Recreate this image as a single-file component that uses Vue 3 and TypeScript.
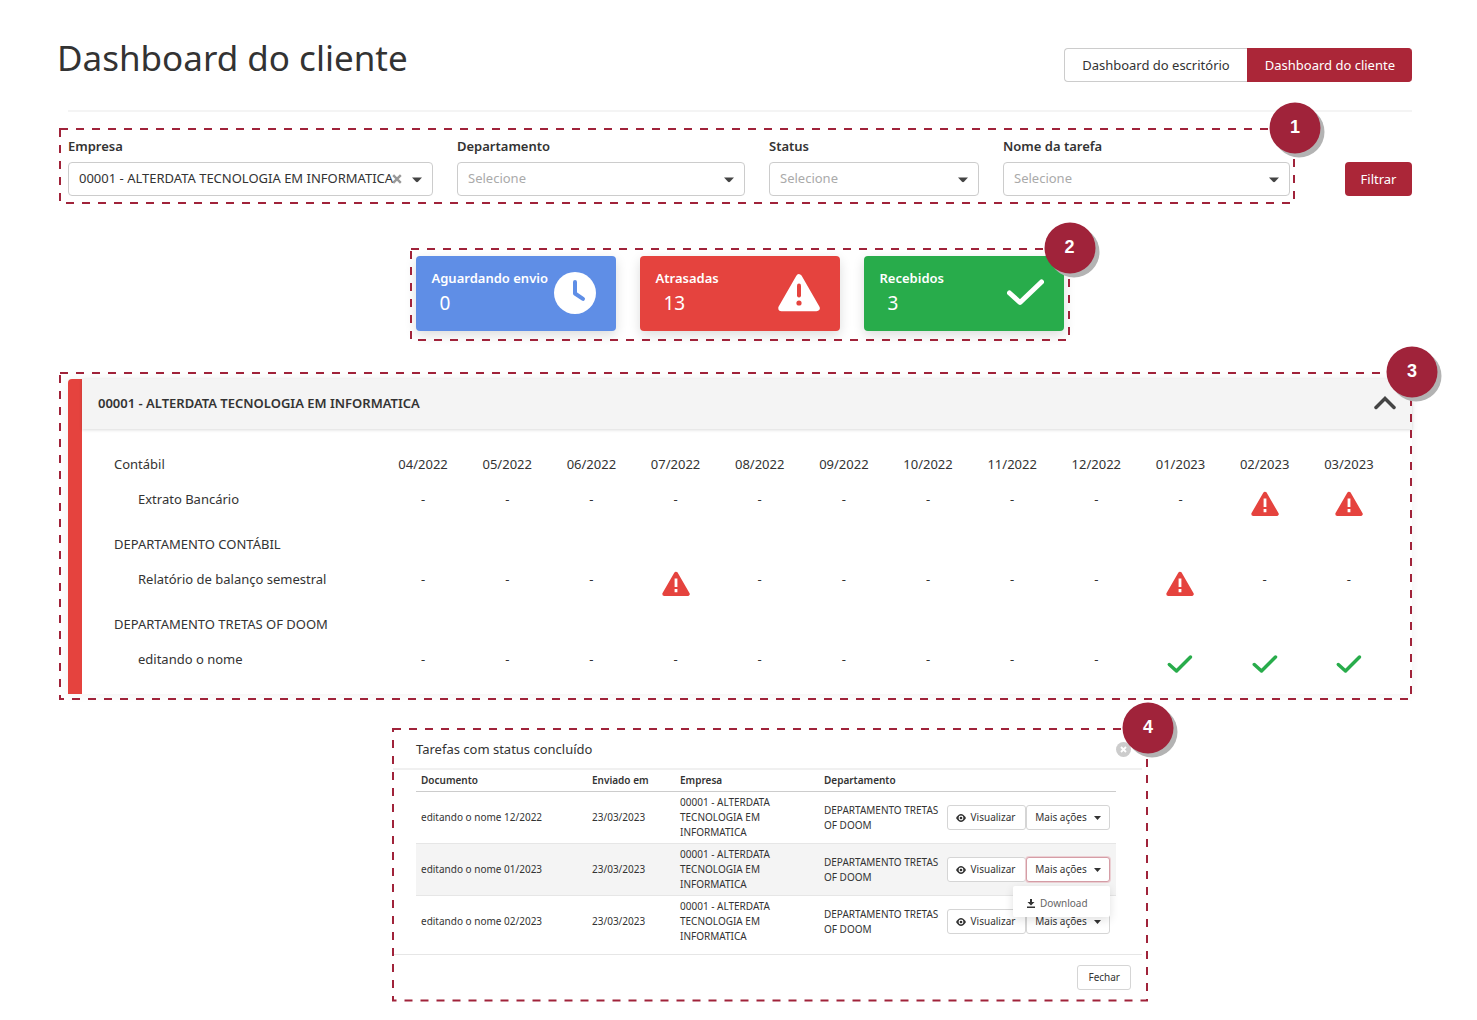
<script setup lang="ts">
import { ref } from 'vue'

type Cell = '-' | 'late' | 'done'

interface Field {
  id: string
  label: string
  options: string[]
  clearable?: boolean
}

interface Group {
  name: string
  task: string
  cells: Cell[]
}

const company = '00001 - ALTERDATA TECNOLOGIA EM INFORMATICA'

const fields: Field[] = [
  { id: 'empresa', label: 'Empresa', options: [company], clearable: true },
  { id: 'departamento', label: 'Departamento', options: ['Selecione'] },
  { id: 'status', label: 'Status', options: ['Selecione'] },
  { id: 'tarefa', label: 'Nome da tarefa', options: ['Selecione'] },
]

const cards = [
  { kind: 'waiting', label: 'Aguardando envio', value: 0 },
  { kind: 'late', label: 'Atrasadas', value: 13 },
  { kind: 'done', label: 'Recebidos', value: 3 },
]

const months = [
  '04/2022', '05/2022', '06/2022', '07/2022', '08/2022', '09/2022',
  '10/2022', '11/2022', '12/2022', '01/2023', '02/2023', '03/2023',
]

const groups: Group[] = [
  {
    name: 'Contábil',
    task: 'Extrato Bancário',
    cells: ['-', '-', '-', '-', '-', '-', '-', '-', '-', '-', 'late', 'late'],
  },
  {
    name: 'DEPARTAMENTO CONTÁBIL',
    task: 'Relatório de balanço semestral',
    cells: ['-', '-', '-', 'late', '-', '-', '-', '-', '-', 'late', '-', '-'],
  },
  {
    name: 'DEPARTAMENTO TRETAS OF DOOM',
    task: 'editando o nome',
    cells: ['-', '-', '-', '-', '-', '-', '-', '-', '-', 'done', 'done', 'done'],
  },
]

const documents = ['12/2022', '01/2023', '02/2023']
const openMenu = ref(1)
</script>

<template>
  <main class="page">
    <header class="top">
      <h1>Dashboard do cliente</h1>
      <div class="switch">
        <button type="button">Dashboard do escritório</button>
        <button type="button" class="active">Dashboard do cliente</button>
      </div>
    </header>
    <hr class="rule" />

    <form class="filters" @submit.prevent>
      <div class="frame filter-frame">
        <svg class="outline" aria-hidden="true"><rect /></svg>
        <div v-for="f in fields" :key="f.id" class="field">
          <label :for="f.id">{{ f.label }}</label>
          <div class="control">
            <select :id="f.id" :class="{ empty: !f.clearable }">
              <option v-for="o in f.options" :key="o">{{ o }}</option>
            </select>
            <button v-if="f.clearable" type="button" class="clear" aria-label="Limpar">
              <svg width="10" height="10" viewBox="0 0 10 10"><path d="M1.2 1.2 8.8 8.8M8.8 1.2 1.2 8.8" stroke="#999" stroke-width="2.4" /></svg>
            </button>
            <svg class="caret" width="10" height="6" viewBox="0 0 10 6"><path d="M0 .5h10L6 4.8q-1 .9-2 0z" fill="#444" /></svg>
          </div>
        </div>
        <span class="badge">1</span>
      </div>
      <button type="submit" class="primary">Filtrar</button>
    </form>

    <section class="frame card-frame">
      <svg class="outline" aria-hidden="true"><rect /></svg>
      <article v-for="c in cards" :key="c.kind" class="card" :class="c.kind">
        <div class="card-text">
          <h2>{{ c.label }}</h2>
          <p>{{ c.value }}</p>
        </div>
        <svg v-if="c.kind === 'waiting'" width="42" height="42" viewBox="0 0 42 42">
          <circle cx="21" cy="21" r="21" fill="#fff" />
          <path d="M21 10v11.5l8 5.300" fill="none" stroke="#5f8ee6" stroke-width="4" stroke-linecap="round" stroke-linejoin="round" />
        </svg>
        <svg v-else-if="c.kind === 'late'" width="42" height="38" viewBox="0 0 42 38">
          <path d="M21 3.500 38.500 34H3.500z" fill="#fff" stroke="#fff" stroke-width="6.500" stroke-linejoin="round" />
          <path d="M21 11.500v10" stroke="#e5433e" stroke-width="4" stroke-linecap="round" />
          <circle cx="21" cy="29" r="2.600" fill="#e5433e" />
        </svg>
        <svg v-else width="37" height="27" viewBox="0 0 37 27">
          <path d="M2.500 14 13 23.500 34.500 3" fill="none" stroke="#fff" stroke-width="5" stroke-linecap="round" stroke-linejoin="round" />
        </svg>
      </article>
      <span class="badge">2</span>
    </section>

    <section class="frame panel-frame">
      <svg class="outline" aria-hidden="true"><rect /></svg>
      <div class="panel">
        <div class="panel-head">
          <h2>{{ company }}</h2>
          <button type="button" aria-label="Recolher">
            <svg width="22" height="14" viewBox="0 0 22 14"><path d="M2 11.500 11 2.500l9 9" fill="none" stroke="#444" stroke-width="3.500" stroke-linecap="round" /></svg>
          </button>
        </div>
        <div class="panel-body">
          <table class="months">
            <colgroup>
              <col class="name-col" />
              <col v-for="m in months" :key="m" />
            </colgroup>
            <tbody v-for="(g, gi) in groups" :key="g.name">
              <tr class="group">
                <th scope="row" :colspan="gi ? 13 : 1">{{ g.name }}</th>
                <template v-if="gi === 0">
                  <th v-for="m in months" :key="m" scope="col" class="mid">{{ m }}</th>
                </template>
              </tr>
              <tr class="task">
                <th scope="row">{{ g.task }}</th>
                <td v-for="(c, i) in g.cells" :key="i">
                  <template v-if="c === '-'">-</template>
                  <svg v-else-if="c === 'late'" width="28" height="26" viewBox="0 0 28 26" role="img" aria-label="Atrasada">
                    <path d="M14 2.800 25.700 23H2.300z" fill="#e5433e" stroke="#e5433e" stroke-width="4" stroke-linejoin="round" />
                    <path d="M14 7.500v8.500M14 18v3.200" stroke="#fff" stroke-width="2.800" />
                  </svg>
                  <svg v-else width="28" height="26" viewBox="0 0 28 26" role="img" aria-label="Recebida">
                    <path d="M3.300 13.500 10.500 20 24.500 6" fill="none" stroke="#28ac4b" stroke-width="3.500" stroke-linecap="round" stroke-linejoin="round" />
                  </svg>
                </td>
              </tr>
            </tbody>
          </table>
        </div>
      </div>
      <span class="badge">3</span>
    </section>

    <section class="frame modal-frame">
      <svg class="outline" aria-hidden="true"><rect /></svg>
      <div class="modal">
        <header class="modal-head">
          <h2>Tarefas com status concluído</h2>
          <button type="button" aria-label="Fechar janela">
            <svg width="15" height="15" viewBox="0 0 15 15"><circle cx="7.500" cy="7.500" r="7.500" fill="#ccc" /><path d="m5 5 5 5m0-5-5 5" stroke="#fff" stroke-width="1.800" /></svg>
          </button>
        </header>
        <table class="docs">
          <colgroup>
            <col class="c-doc" /><col class="c-date" /><col class="c-company" /><col class="c-dept" /><col />
          </colgroup>
          <thead>
            <tr>
              <th scope="col">Documento</th>
              <th scope="col">Enviado em</th>
              <th scope="col">Empresa</th>
              <th scope="col">Departamento</th>
              <td></td>
            </tr>
          </thead>
          <tbody>
            <tr v-for="(d, i) in documents" :key="d">
              <td>editando o nome {{ d }}</td>
              <td>23/03/2023</td>
              <td>{{ company }}</td>
              <td>DEPARTAMENTO TRETAS OF DOOM</td>
              <td>
                <div class="actions">
                  <button type="button" class="small view">
                    <svg width="10" height="8" viewBox="0 0 10 8"><path d="M0 4Q5-4 10 4 5 12 0 4z" fill="#333" /><circle cx="5" cy="4" r="1.900" fill="none" stroke="#fff" stroke-width="1.100" /></svg>
                    Visualizar
                  </button>
                  <button
                    type="button"
                    class="small more"
                    :class="{ focused: openMenu === i }"
                    @click="openMenu = openMenu === i ? -1 : i"
                  >
                    Mais ações
                    <svg width="7" height="4" viewBox="0 0 7 4"><path d="M0 0h7L3.500 4z" fill="#333" /></svg>
                  </button>
                  <div v-if="openMenu === i" class="menu">
                    <a href="#">
                      <svg width="8" height="9" viewBox="0 0 8 9"><path d="M3 0h2v3h2.500L4 6.500.500 3H3zM0 7.500h8V9H0z" fill="#333" /></svg>
                      Download
                    </a>
                  </div>
                </div>
              </td>
            </tr>
          </tbody>
        </table>
        <footer class="modal-foot">
          <button type="button" class="small">Fechar</button>
        </footer>
      </div>
      <span class="badge">4</span>
    </section>
  </main>
</template>

<style>
body {
  margin: 0;
  background: #fff;
}
</style>

<style scoped>
.page {
  box-sizing: border-box;
  padding: 34px 65px 19px 57px;
  color: #333;
  font: 13px/20px "Noto Sans", "Open Sans", sans-serif;
}
.page * {
  box-sizing: border-box;
}
h1,
h2,
p {
  margin: 0;
  font-weight: 400;
}
button,
select {
  margin: 0;
  font: inherit;
  color: inherit;
}
button {
  cursor: pointer;
}
svg {
  flex: none;
}
table {
  border-collapse: collapse;
  table-layout: fixed;
}
th,
td {
  padding: 0;
  font-weight: 400;
  text-align: left;
}

.top {
  display: flex;
  justify-content: space-between;
  align-items: flex-end;
}
h1 {
  font-size: 35px;
  line-height: 48px;
}
.switch {
  display: flex;
}
.switch button {
  height: 34px;
  padding: 0 17px;
  border: 1px solid #ccc;
  border-right: 0;
  border-radius: 4px 0 0 4px;
  background: #fff;
}
.switch .active {
  border-color: #ab2638;
  border-radius: 0 4px 4px 0;
  background: #ab2638;
  color: #fff;
}
.rule {
  height: 2px;
  margin: 28px 0 16px 11px;
  border: 0;
  background: #f4f4f4;
}

.frame {
  position: relative;
}
.outline {
  position: absolute;
  inset: 0;
  width: 100%;
  height: 100%;
  pointer-events: none;
}
.outline rect {
  x: 1px;
  y: 1px;
  width: calc(100% - 2px);
  height: calc(100% - 2px);
  fill: none;
  stroke: #a0233a;
  stroke-width: 2px;
  stroke-dasharray: 8 8;
}
.badge {
  position: absolute;
  top: 0;
  right: 0;
  width: 51px;
  height: 51px;
  border-radius: 50%;
  background: #a0233a;
  box-shadow: 4px 4px 0 #b3b3b3;
  color: #fff;
  font: bold 18px/49px "Liberation Sans", Arial, sans-serif;
  text-align: center;
  transform: translate(50%, -50%);
}

.filters {
  display: flex;
  align-items: flex-end;
  gap: 50px;
  margin-left: 2px;
}
.filter-frame {
  flex: 1;
  display: grid;
  grid-template-columns: 365fr 288fr 210fr 287fr;
  gap: 24px;
  padding: 8px 5px 8px 9px;
}
.field {
  min-width: 0;
}
.field label {
  display: block;
  margin-bottom: 6px;
  font-weight: 600;
}
.control {
  position: relative;
}
select {
  display: block;
  width: 100%;
  height: 34px;
  padding: 0 24px 2px 10px;
  border: 1px solid #ccc;
  border-radius: 4px;
  background: #fff;
  appearance: none;
}
select.empty {
  color: #aaa;
}
.caret {
  position: absolute;
  top: 15px;
  right: 11px;
  pointer-events: none;
}
.clear {
  position: absolute;
  top: 12px;
  right: 31px;
  display: flex;
  padding: 0;
  border: 0;
  background: none;
}
.primary {
  min-width: 67px;
  height: 34px;
  margin-bottom: 8px;
  padding: 0 15px;
  border: 0;
  border-radius: 4px;
  background: #ab2638;
  color: #fff;
}

.card-frame {
  display: flex;
  gap: 24px;
  width: fit-content;
  margin: 44px auto 0;
  padding: 8px 6px 10px;
  left: 5px;
}
.card {
  display: flex;
  justify-content: space-between;
  align-items: center;
  width: 200px;
  height: 75px;
  padding: 0 20px 2px 16px;
  border-radius: 4px;
  box-shadow: 0 4px 12px rgba(0, 0, 0, 0.14);
  color: #fff;
}
.card.waiting {
  background: #5f8ee6;
}
.card.late {
  background: #e5433e;
}
.card.done {
  background: #28ac4b;
}
.card-text {
  padding-bottom: 3px;
}
.card h2 {
  font-size: 13px;
  font-weight: 600;
  line-height: 24px;
  white-space: nowrap;
}
.card p {
  padding-left: 8px;
  font-size: 19px;
  line-height: 26px;
}

.panel-frame {
  margin: 31px 0 0 2px;
  padding: 7px 0 6px 9px;
}
.panel {
  border-left: 14px solid #e5433e;
  border-top-left-radius: 4px;
  box-shadow: 0 0 12px rgba(0, 0, 0, 0.06);
}
.panel-head {
  display: flex;
  justify-content: space-between;
  align-items: center;
  height: 50px;
  padding: 0 16px 2px;
  background: #f4f4f4;
  box-shadow: 0 1px 3px rgba(0, 0, 0, 0.15);
}
.panel-head h2 {
  font-size: 13px;
  font-weight: 600;
}
.panel-head button,
.modal-head button {
  display: flex;
  padding: 0;
  border: 0;
  background: none;
}
.panel-body {
  padding: 18px 21px 7px 32px;
}
.months {
  width: 100%;
}
.name-col {
  width: 267px;
}
.months th,
.months td {
  line-height: 35px;
  vertical-align: top;
  white-space: nowrap;
}
.group {
  height: 35px;
}
.task {
  height: 45px;
}
.months .task th {
  padding-left: 24px;
}
.months .mid,
.task td {
  text-align: center;
}
.task svg {
  display: block;
  margin: 9px auto 0;
}

.modal-frame {
  width: 756px;
  margin: 28px 0 0 335px;
  padding: 0 6px 0 1px;
  font-size: 10px;
  line-height: 15px;
}
.modal-head {
  display: flex;
  justify-content: space-between;
  align-items: center;
  height: 42px;
  padding: 2px 11px 0 23px;
  border-bottom: 2px solid #f0f0f0;
}
.modal-head h2 {
  font-size: 13px;
}
.docs {
  width: 700px;
  margin-left: 23px;
}
.c-doc {
  width: 171px;
}
.c-date {
  width: 88px;
}
.c-company {
  width: 144px;
}
.c-dept {
  width: 123px;
}
.docs th,
.docs td {
  padding: 3px 0 3px 5px;
}
.docs th {
  font-weight: 600;
}
.docs thead tr {
  height: 21px;
  border-bottom: 1px solid #ccc;
}
.docs tbody tr {
  height: 52px;
}
.docs tbody tr:nth-child(2) {
  border: solid #e6e6e6;
  border-width: 1px 0;
  background: #f4f4f4;
}
.actions {
  position: relative;
  display: flex;
  width: 163px;
}
.small {
  display: flex;
  justify-content: center;
  align-items: center;
  height: 25px;
  padding: 0 10px;
  border: 1px solid #d5d5d5;
  border-radius: 3px;
  background: #fff;
  font-size: 10px;
  white-space: nowrap;
}
.view {
  gap: 5px;
  width: 79px;
  padding: 0 2px 0 0;
}
.more {
  gap: 7px;
  width: 84px;
  padding: 0;
}
.focused {
  border-color: #d59da6;
  box-shadow: 0 0 0 1px #ecd0d4;
}
.menu {
  position: absolute;
  z-index: 1;
  top: 29px;
  right: 0;
  width: 97px;
  padding: 10px 14px 6px;
  border-radius: 2px;
  background: #fff;
  box-shadow: 0 3px 10px rgba(0, 0, 0, 0.12);
}
.menu a {
  display: flex;
  align-items: center;
  gap: 5px;
  color: #666;
  text-decoration: none;
}
.modal-foot {
  display: flex;
  justify-content: flex-end;
  margin-top: 6px;
  padding: 10px 11px 12px;
  border-top: 1px solid #e6e6e6;
}
</style>
